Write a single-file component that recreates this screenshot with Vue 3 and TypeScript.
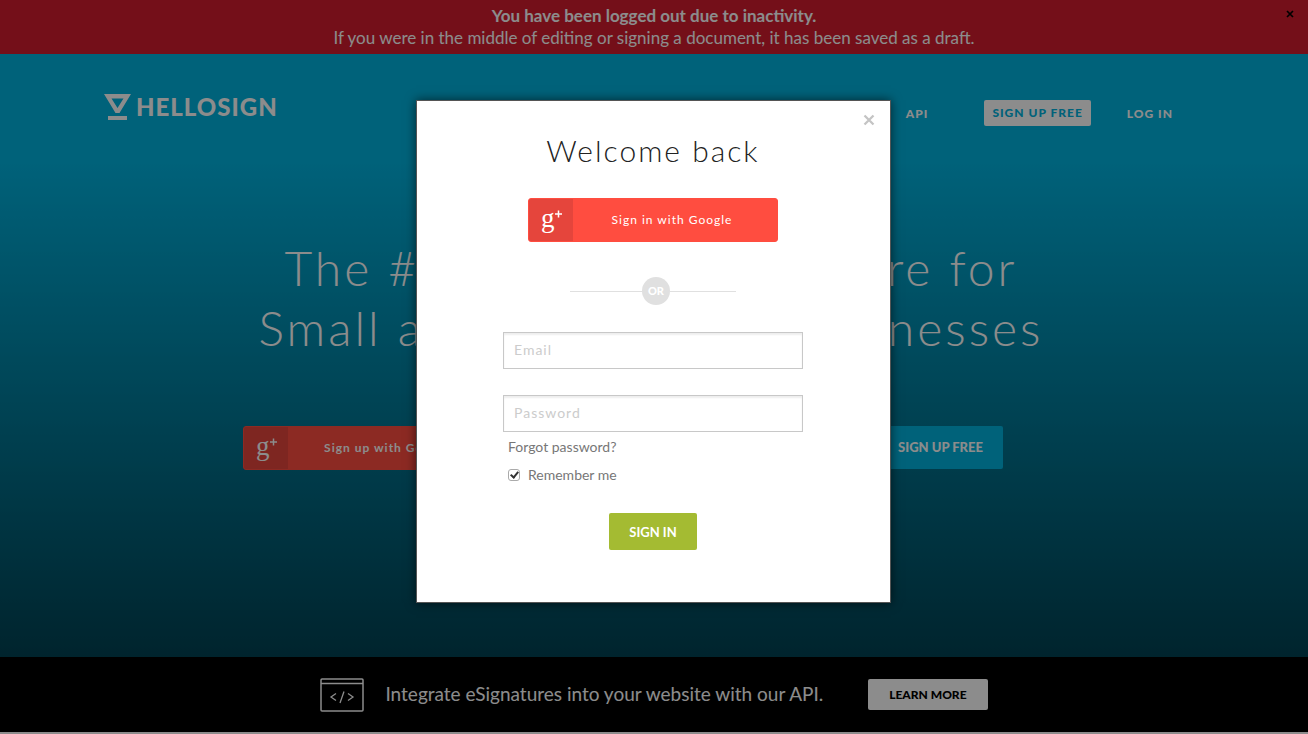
<script setup lang="ts">
import { ref } from 'vue'

const email = ref('')
const password = ref('')
const remember = ref(true)
</script>

<template>
  <div class="page">
    <div class="notice" role="alert">
      <strong>You have been logged out due to inactivity.</strong>
      <span>If you were in the middle of editing or signing a document, it has been saved as a draft.</span>
      <button class="notice-close" type="button" aria-label="Dismiss">
        <svg viewBox="0 0 8 8" width="8" height="8"><path d="M1 1L7 7M7 1L1 7" fill="none" stroke="#000" stroke-width="1.700" /></svg>
      </button>
    </div>

    <section class="hero">
      <header class="top">
        <a class="logo" href="#">
          <svg viewBox="0 0 27 27" width="27" height="27" aria-hidden="true">
            <path d="M0 0H27L15.5 19H11.5ZM7.5 4.5L13.5 14L19.5 4.5Z" fill="#fff" fill-rule="evenodd" />
            <rect x="4" y="22" width="19" height="4" fill="#fff" />
          </svg>
          <span>HELLOSIGN</span>
        </a>
        <nav class="nav">
          <a href="#">API</a>
          <a class="nav-signup" href="#">SIGN UP FREE</a>
          <a href="#">LOG IN</a>
        </nav>
      </header>

      <h1>The #1 eSignature software for<br />Small and Mid-Market Businesses</h1>

      <div class="hero-actions">
        <button class="google strong" type="button">
          <span class="gplus" aria-hidden="true">
            <svg viewBox="0 0 44 44" width="44" height="44"><text x="12" y="28" font-size="27">g</text><path d="M26 15H33M29.500 11.500V18.500" /></svg>
          </span>
          <span class="google-label">Sign up with Google</span>
        </button>
        <button class="hero-signup" type="button">SIGN UP FREE</button>
      </div>
    </section>

    <section class="api">
      <svg class="code" viewBox="0 0 44 34" width="44" height="34" fill="none" stroke="#fff" aria-hidden="true">
        <rect x="1" y="1" width="42" height="32" rx="1" stroke-width="1.500" />
        <path d="M1 5.500H43" stroke-width="1.500" />
        <path d="M16 15.500L11 19L16 22.500M28 15.500L33 19L28 22.500M24 13.500L20 25" stroke-width="1.300" />
      </svg>
      <p>Integrate eSignatures into your website with our API.</p>
      <a class="learn" href="#">LEARN MORE</a>
    </section>

    <div class="shade"></div>

    <div class="dialog" role="dialog" aria-labelledby="title">
      <button class="close" type="button" aria-label="Close">
        <svg viewBox="0 0 12 12" width="12" height="12"><path d="M1.500 1.500L10.500 10.500M10.500 1.500L1.500 10.500" fill="none" stroke="#c4c4c4" stroke-width="2.300" /></svg>
      </button>
      <h2 id="title">Welcome back</h2>
      <button class="google" type="button">
        <span class="gplus" aria-hidden="true">
          <svg viewBox="0 0 44 44" width="44" height="44"><text x="12" y="28" font-size="27">g</text><path d="M26 15H33M29.500 11.500V18.500" /></svg>
        </span>
        <span class="google-label">Sign in with Google</span>
      </button>
      <div class="or"><span>OR</span></div>
      <form @submit.prevent>
        <input v-model="email" class="field" type="email" placeholder="Email" aria-label="Email" />
        <input v-model="password" class="field" type="password" placeholder="Password" aria-label="Password" />
        <a class="forgot" href="#">Forgot password?</a>
        <label class="remember">
          <input v-model="remember" type="checkbox" />
          <span>Remember me</span>
        </label>
        <button class="signin" type="submit">SIGN IN</button>
      </form>
    </div>
  </div>
</template>

<style>
body {
  margin: 0;
}
</style>

<style scoped>
.page {
  position: relative;
  display: flex;
  flex-direction: column;
  min-height: 100vh;
  color: #fff;
  font-family: Lato, "Open Sans", sans-serif;
}
.page * {
  box-sizing: border-box;
}
a {
  color: inherit;
  text-decoration: none;
}
button {
  padding: 0;
  border: 0;
  background: none;
  color: inherit;
  font: inherit;
  cursor: pointer;
}
svg {
  display: block;
}
.notice {
  position: relative;
  display: flex;
  flex-direction: column;
  align-items: center;
  padding: 5px 32px;
  background: #d31d2f;
  font-size: 17px;
  line-height: 22px;
  text-align: center;
}
.notice-close {
  position: absolute;
  top: 10px;
  right: 14px;
}
.hero {
  flex: 1;
  display: flex;
  flex-direction: column;
  align-items: center;
  padding: 38px 24px 0;
  background: linear-gradient(#00b2de 18%, #004253 100%);
}
.top {
  display: flex;
  justify-content: space-between;
  width: 100%;
  max-width: 1100px;
}
.logo {
  display: flex;
  align-items: center;
  gap: 5px;
  height: 30px;
  font-size: 24px;
  font-weight: 900;
  letter-spacing: 1px;
  line-height: 28px;
}
.nav {
  display: flex;
  align-items: center;
  gap: 36px;
  height: 42px;
  padding-right: 31px;
  font-size: 12px;
  font-weight: 900;
}
.nav a {
  letter-spacing: 1px;
}
.nav-signup {
  padding: 0 8px;
  border-radius: 2px;
  background: #fff;
  color: #00b2de;
  line-height: 26px;
}
.nav > :first-child {
  margin-right: 20px;
}
h1 {
  margin: 104px 0 0;
  padding-right: 6px;
  font-size: 48px;
  font-weight: 300;
  letter-spacing: 3px;
  line-height: 60px;
  text-align: center;
}
.hero-actions {
  display: flex;
  align-items: flex-start;
  justify-content: space-between;
  width: 100%;
  max-width: 760px;
  margin: 68px 62px 0 0;
}
.google {
  display: flex;
  width: 250px;
  height: 44px;
  overflow: hidden;
  border: 1px solid #ff4d40;
  border-radius: 3px;
  background: #ff4d40;
  color: #fff;
  font-size: 12px;
  letter-spacing: 1px;
}
.strong {
  font-weight: 700;
}
.gplus {
  width: 44px;
  height: 100%;
  background: #e5453c;
}
.gplus text {
  fill: #fff;
  font-family: "Liberation Serif", serif;
  font-weight: 400;
}
.gplus path {
  fill: none;
  stroke: #fff;
  stroke-width: 1.500;
}
.google-label {
  flex: 1;
  padding-right: 6px;
  line-height: 42px;
  text-align: center;
}
.hero-signup {
  padding: 0 20px;
  border-radius: 2px;
  background: #00b2de;
  font-size: 13px;
  font-weight: 900;
  line-height: 43px;
}
.api {
  display: flex;
  align-items: center;
  justify-content: center;
  gap: 21px;
  height: 77px;
  border-bottom: 2px solid #fff;
  background: #000;
}
.api p {
  margin: 0;
  padding-bottom: 2px;
  font-size: 19px;
}
.learn {
  margin-left: 24px;
  padding: 0 21px;
  border-radius: 2px;
  background: #fff;
  color: #000;
  font-size: 12px;
  font-weight: 900;
  line-height: 31px;
}
.shade {
  position: absolute;
  inset: 0;
  background: rgba(0, 0, 0, 0.45);
}
.dialog {
  position: absolute;
  top: 100px;
  left: 0;
  right: 1px;
  display: flex;
  flex-direction: column;
  align-items: center;
  width: 475px;
  max-width: 100%;
  margin: 0 auto;
  padding: 29px 25px 52px 24px;
  border: 1px solid #555;
  background: #fff;
  box-shadow: 0 0 10px rgba(0, 0, 0, 0.6);
  color: #222;
}
.close {
  position: absolute;
  top: 13px;
  right: 15px;
}
h2 {
  margin: 0 0 28px;
  font-size: 30px;
  font-weight: 300;
  letter-spacing: 2px;
  line-height: 40px;
}
.or {
  display: flex;
  align-items: center;
  width: 166px;
  margin: 35px 0 27px;
}
.or::before,
.or::after {
  content: "";
  width: 72px;
  height: 1px;
  background: #e0e0e0;
}
.or::after {
  flex: 1;
}
.or span {
  width: 28px;
  border-radius: 50%;
  background: #e0e0e0;
  color: #fff;
  font-size: 11px;
  font-weight: 900;
  line-height: 28px;
  text-align: center;
}
form {
  display: flex;
  flex-direction: column;
  width: 300px;
  color: #777;
  font-size: 14px;
}
.field {
  width: 100%;
  height: 37px;
  margin: 0 0 26px;
  padding: 0 10px 2px;
  border: 1px solid #c8c8c8;
  border-radius: 0;
  outline: 0;
  background: #fff;
  box-shadow: inset 0 2px 2px #eee;
  color: #333;
  font: inherit;
  letter-spacing: 1px;
}
.field::placeholder {
  color: #ccc;
}
.field[type="password"] {
  margin-bottom: 5px;
}
.forgot {
  align-self: flex-start;
  margin-left: 5px;
  line-height: 20px;
}
.remember {
  display: flex;
  align-items: center;
  gap: 8px;
  margin: 8px 0 0 5px;
  line-height: 20px;
}
.remember input {
  appearance: none;
  display: grid;
  place-items: center;
  width: 12px;
  height: 12px;
  margin: 0;
  border: 1px solid #aaa;
  border-radius: 3px;
  background: #fff;
}
.remember input:checked::after {
  content: "";
  box-sizing: border-box;
  width: 5px;
  height: 8px;
  margin-bottom: 2px;
  border: solid #333;
  border-width: 0 2px 2px 0;
  transform: rotate(40deg);
}
.signin {
  align-self: center;
  margin-top: 28px;
  padding: 1px 20px 0;
  border-radius: 2px;
  background: #a4bb32;
  color: #fff;
  font-size: 13px;
  font-weight: 700;
  line-height: 36px;
}
</style>
